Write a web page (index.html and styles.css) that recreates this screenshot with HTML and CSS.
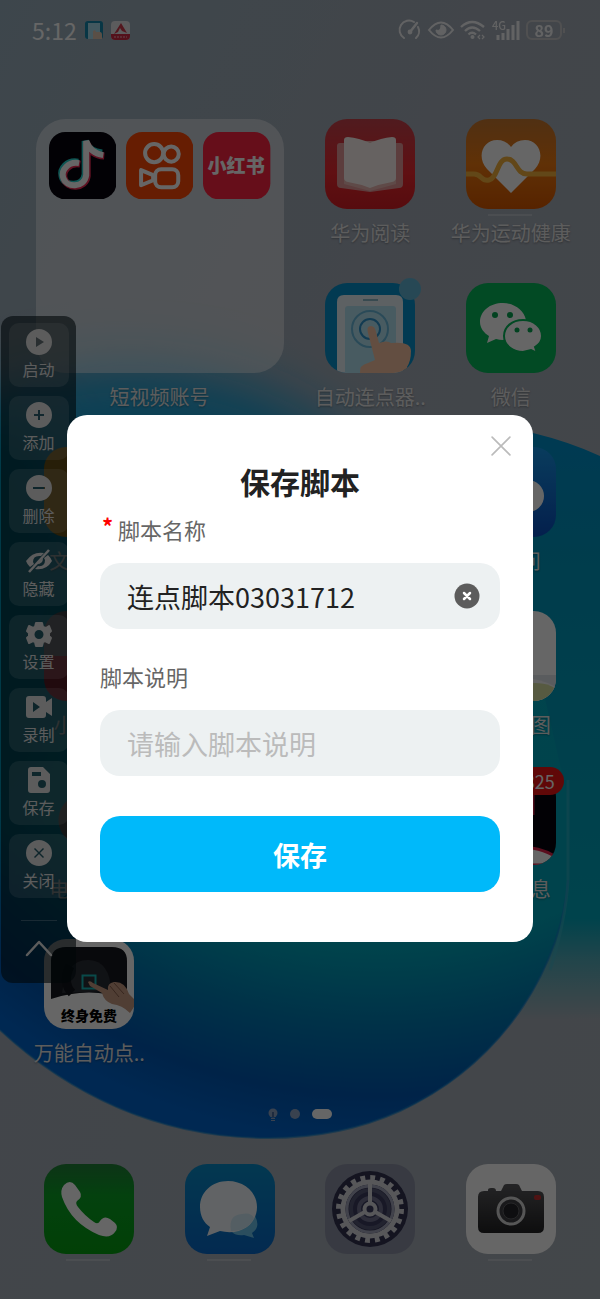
FILE: index.html
```html
<!DOCTYPE html>
<html lang="zh-CN">
<head>
    <meta charset="UTF-8">
    <meta name="viewport" content="width=device-width, initial-scale=1.0">
    <title>保存脚本</title>
    <link rel="stylesheet" href="styles.css">
</head>
<body>

<div class="phone">
    <svg class="wallpaper" viewBox="0 0 600 1299" preserveAspectRatio="none" aria-hidden="true">
        <defs>
            <linearGradient id="sky" x1="0" y1="0" x2="1" y2="1">
                <stop offset="0" stop-color="#9aafbd"/>
                <stop offset=".4" stop-color="#a5adb9"/>
                <stop offset="1" stop-color="#a9b1b8"/>
            </linearGradient>
            <radialGradient id="sphere" gradientUnits="userSpaceOnUse" cx="380" cy="500" r="640">
                <stop offset="0" stop-color="#00acc3"/>
                <stop offset=".7" stop-color="#00a8bd"/>
                <stop offset=".82" stop-color="#007cb4"/>
                <stop offset=".93" stop-color="#0058b4"/>
                <stop offset="1" stop-color="#0064cc"/>
            </radialGradient>
            <linearGradient id="back" x1="0" y1="0" x2="0" y2="1">
                <stop offset="0" stop-color="#0090d0"/>
                <stop offset=".25" stop-color="#0098bd"/>
                <stop offset=".83" stop-color="#00a8bd"/>
                <stop offset=".9" stop-color="#00a8bd" stop-opacity=".5"/>
                <stop offset="1" stop-color="#00a8bd" stop-opacity="0"/>
            </linearGradient>
            <filter id="soft" x="-50%" y="-50%" width="200%" height="200%"><feGaussianBlur stdDeviation="28"/></filter>
        </defs>
        <rect width="600" height="1299" fill="url(#sky)"/>
        <ellipse cx="130" cy="590" rx="290" ry="225" fill="#1fa0d4" filter="url(#soft)"/>
        <path d="M300 420Q450 410 533 433Q570 442 600 456V1020H300Z" fill="url(#back)"/>
        <path d="M0 700L100 500H500L568 800V880C562 960 510 1060 400 1111Q340 1138 268 1138C160 1138 70 1095 0 1030Z" fill="url(#sphere)"/>
        <path d="M568 880C562 960 510 1060 400 1111Q340 1138 268 1138C160 1138 70 1095 0 1030" fill="none" stroke="#1280cc" stroke-width="2" opacity=".6"/>
        <path d="M568 780V880Q566 920 550 970" fill="none" stroke="#40b4c8" stroke-width="3" opacity=".5"/>
        <ellipse cx="0" cy="620" rx="80" ry="210" fill="#008fae" filter="url(#soft)"/>
    </svg>

    <header class="status-bar">
        <span class="time">5:12</span>
        <svg width="18" height="18" viewBox="0 0 18 18" aria-hidden="true">
            <rect width="18" height="18" rx="3" fill="#1487ad"/>
            <path d="M3 2H15V18H3Z" fill="#a8dcee"/>
            <path d="M8 10L10 9L11 11H15Q17 11 17 14V18H8Z" fill="#e0c5ae"/>
        </svg>
        <svg width="19" height="19" viewBox="0 0 19 19" aria-hidden="true">
            <rect width="19" height="19" rx="4" fill="#e6e6e8"/>
            <path d="M0 13H19V15Q19 19 15 19H4Q0 19 0 15Z" fill="#d22b44"/>
            <path d="M10 2L16 12L11 10L9 7L7 11L3 13Z" fill="#cf3b4d"/>
            <path d="M3 16H16" stroke="#f5b8c0" stroke-dasharray="2 1"/>
        </svg>
        <div class="indicators">
            <svg width="23" height="20" viewBox="0 0 23 20" fill="none" stroke="currentColor" stroke-width="2" stroke-linecap="round" aria-hidden="true">
                <path d="M5 18A9 9 0 0 1 15 2M19 7A9 9 0 0 1 17 18"/>
                <path d="M11 12L18 3" stroke-width="2.4"/><circle cx="11" cy="12" r="1.4" fill="currentColor"/>
            </svg>
            <svg width="26" height="20" viewBox="0 0 26 20" fill="none" stroke="currentColor" stroke-width="2" aria-hidden="true">
                <path d="M1 10Q13-5 25 10Q13 25 1 10Z"/>
                <path d="M13 5A5 5 0 1 1 8 10Q13 12 13 5Z" fill="currentColor" stroke-width="1"/>
            </svg>
            <svg width="26" height="20" viewBox="0 0 26 20" fill="none" stroke="currentColor" stroke-width="2.3" aria-hidden="true">
                <path d="M1 7Q12-3 24 7M5 11Q12 4 20 11M8.500 14.500Q12 11 16 14.500"/>
                <circle cx="12.500" cy="17" r="2" fill="currentColor" stroke="none"/>
                <path d="M20 15L18 17L20 19M22 15L24 17L22 19" stroke-width="1.200"/>
            </svg>
            <svg width="28" height="20" viewBox="0 0 28 20" fill="none" stroke="currentColor" stroke-width="3" aria-hidden="true">
                <path d="M6 20V15M11 20V13M16 20V9M21 20V5M26 20V1"/>
                <text class="network" x="0" y="10">4G</text>
            </svg>
            <span class="battery">89</span>
        </div>
    </header>

    <main class="home">
        <section class="folder">
            <div class="folder-box">
                <svg viewBox="0 0 67 67" aria-hidden="true">
                    <rect width="67" height="67" rx="16" fill="#06030e"/>
                    <g fill="none" stroke-width="7">
                        <path d="M29 30C18 28 11 37 13 44C16 55 34 55 36 42V9Q40 20 53 21" stroke="#25d5d0"/>
                        <path d="M31 32C20 30 13 39 15 46C18 57 36 57 38 44V12Q42 23 55 24" stroke="#f02c56"/>
                        <path d="M30 31C19 29 12 38 14 45C17 56 35 56 37 43V9Q41 21 54 23" stroke="#fff" stroke-width="6"/>
                    </g>
                </svg>
                <svg viewBox="0 0 67 67" fill="none" stroke="#fff" stroke-width="4" aria-hidden="true">
                    <rect width="67" height="67" rx="16" fill="#ff4a06" stroke="none"/>
                    <circle cx="28" cy="21" r="9"/><circle cx="45" cy="22" r="7.500"/>
                    <rect x="29" y="37" width="23" height="18" rx="6"/>
                    <path d="M15 38V53L27 48V43Z" stroke-linejoin="round"/>
                </svg>
                <svg viewBox="0 0 67 67" aria-hidden="true">
                    <rect width="67" height="67" rx="16" fill="#ff2443"/>
                    <text class="red-book" x="33" y="41" text-anchor="middle">小红书</text>
                </svg>
            </div>
            <span class="label">短视频账号</span>
        </section>

        <a class="app" href="#">
            <span class="icon reader">
                <svg viewBox="0 0 90 90" aria-hidden="true">
                    <path d="M15 24H75Q78 24 78 27V65Q78 69 74 69L45 73L16 69Q12 69 12 65V27Q12 24 15 24Z" fill="#e79a9a"/>
                    <path d="M19 22H71V65L45 72L19 65Z" fill="#eeb9b4"/>
                    <path d="M23 18Q34 19 45 24Q56 19 67 18Q71 18 71 21V59Q71 62 67 63Q55 65 45 69Q35 65 23 63Q19 62 19 59V21Q19 18 23 18Z" fill="#fff6f2"/>
                </svg>
            </span>
            <span class="label">华为阅读</span>
        </a>
        <a class="app" href="#">
            <span class="icon health running">
                <svg viewBox="0 0 90 90" aria-hidden="true">
                    <path d="M45 74L21 50C10 38 17 21 31 21Q40 21 45 28Q50 21 59 21C73 21 80 38 69 50Z" fill="#fff"/>
                    <path d="M0 55H8C16 55 15 63 23 61C32 59 31 40 41 40C51 40 50 55 61 55H90" fill="none" stroke="#f5b13c" stroke-width="5"/>
                </svg>
            </span>
            <span class="label">华为运动健康</span>
        </a>
        <a class="app" href="#">
            <span class="icon clicker">
                <svg viewBox="0 0 90 90" aria-hidden="true">
                    <path d="M12 90V19Q12 12 19 12H71Q78 12 78 19V90Z" fill="#e9f2f8"/>
                    <path d="M20 90V26Q20 23 23 23H68Q71 23 71 26V90Z" fill="#b4e3f2"/>
                    <path d="M38 17H53" stroke="#8cb8c9" stroke-width="2"/>
                    <g fill="none" stroke="#69b9dc" stroke-width="2"><circle cx="45" cy="46" r="18"/><circle cx="45" cy="46" r="10" stroke="#2d93cc"/></g>
                    <path d="M43 50Q41 43 46 43Q50 43 51 49L54 60Q62 57 66 60Q86 58 86 68Q86 78 82 84V90H35Q34 82 43 80L50 77Z" fill="#f8c4a2"/>
                </svg>
                <i class="dot"></i>
            </span>
            <span class="label">自动连点器..</span>
        </a>
        <a class="app" href="#">
            <span class="icon wechat">
                <svg viewBox="0 0 90 90" aria-hidden="true">
                    <path d="M37 20C24 20 14 28 14 39C14 45 18 50 23 53L21 60L30 56Q37 58 44 56L60 37C58 27 48 20 37 20Z" fill="#fff"/>
                    <path d="M57 37C46 37 38 44 38 53C38 63 48 69 57 69L65 67L71 70L69 64C74 61 76 57 76 53C76 44 68 37 57 37Z" fill="#fff" stroke="#05b85a" stroke-width="2"/>
                    <g fill="#05a652"><circle cx="29" cy="32" r="3"/><circle cx="44" cy="32" r="3"/><circle cx="51" cy="47" r="2.500"/><circle cx="64" cy="47" r="2.500"/></g>
                </svg>
            </span>
            <span class="label">微信</span>
        </a>

        <a class="app first" href="#">
            <span class="icon files"></span>
            <span class="label">文件管理</span>
        </a>
        <a class="app last" href="#">
            <span class="icon chat">
                <svg viewBox="0 0 90 90" aria-hidden="true"><circle cx="62" cy="49" r="16" fill="#fff"/></svg>
            </span>
            <span class="label">问一问</span>
        </a>
        <a class="app first" href="#">
            <span class="icon note"></span>
            <span class="label">小红书..</span>
        </a>
        <a class="app last" href="#">
            <span class="icon map">
                <svg viewBox="0 0 90 90" aria-hidden="true">
                    <path d="M0 64H90V90H0Z" fill="#e2e5ea"/>
                    <path d="M30 70Q65 62 90 76V90H30Z" fill="#f8f8f8"/>
                    <path d="M40 78Q75 66 90 78V90H40Z" fill="#d9e2a4"/>
                </svg>
            </span>
            <span class="label">高德地图</span>
        </a>
        <a class="app first" href="#">
            <span class="icon video"></span>
            <span class="label">电视直播</span>
        </a>
        <a class="app last" href="#">
            <span class="icon news">
                <svg viewBox="0 0 90 90" aria-hidden="true">
                    <path d="M66 18V40" stroke="#c41e42" stroke-width="5"/>
                    <path d="M30 73Q70 68 90 82V90H30Z" fill="#fff" stroke="#e0224a" stroke-width="3"/>
                </svg>
                <b class="badge">825</b>
            </span>
            <span class="label">通知信息</span>
        </a>
        <a class="app first" href="#">
            <span class="icon universal">
                <svg viewBox="0 0 90 90" aria-hidden="true">
                    <path d="M7 60V22Q7 8 22 8H68Q83 8 83 22V60Q45 47 7 60Z" fill="#15171e"/>
                    <path d="M18 54Q22 20 45 21Q66 22 67 52" fill="#2a2d35"/>
                    <path d="M28 54Q18 44 26 27" fill="none" stroke="#111319" stroke-width="9"/>
                    <rect x="38.500" y="36.500" width="13" height="13" fill="none" stroke="#18b9b8" stroke-width="2"/>
                    <path d="M44 43Q46 41 49 44L64 51Q63 44 70 43Q81 42 85 55L90 60V68L86 74Q78 66 68 65Q60 62 58 54L46 47Z" fill="#c79b83"/>
                    <path d="M66 47L75 58M70 44L80 55" stroke="#8a604d" fill="none"/>
                    <text class="free" x="45" y="82" text-anchor="middle">终身免费</text>
                </svg>
            </span>
            <span class="label">万能自动点..</span>
        </a>
    </main>

    <div class="pager">
        <svg width="10" height="13" viewBox="0 0 10 13" aria-hidden="true">
            <circle cx="5" cy="5" r="4.500" fill="#8fa5c5"/><path d="M5 4V9" stroke="#345a92" stroke-width="1.500"/><path d="M3 10.500H7M3 12.500H7" stroke="#8fa5c5"/>
        </svg>
        <i></i>
        <i class="current"></i>
    </div>

    <nav class="dock">
        <a class="icon phone-call running" href="#" aria-label="电话">
            <svg viewBox="0 0 90 90" aria-hidden="true">
                <path d="M20 21Q26 15 31 21L36 28Q39 33 33 37Q31 39 34 43Q41 52 50 58Q54 61 56 57Q60 51 66 55L71 59Q75 63 71 68Q66 75 55 71Q27 59 18 33Q16 26 20 21Z" fill="#fff"/>
            </svg>
        </a>
        <a class="icon messages running" href="#" aria-label="信息">
            <svg viewBox="0 0 90 90" aria-hidden="true">
                <path d="M70 52Q76 63 67 69L69 74L59 71Q51 72 47 68Z" fill="#6cc2ea"/>
                <path d="M43 17C27 17 15 28 15 43C15 52 19 59 25 63L22 72L35 67C56 72 72 60 72 43C72 28 59 17 43 17Z" fill="#f2f8fc"/>
                <path d="M46 67Q43 51 57 50Q66 48 69 54Q63 67 46 67Z" fill="#d2ebf7"/>
            </svg>
        </a>
        <a class="icon settings" href="#" aria-label="设置">
            <svg viewBox="0 0 90 90" fill="none" aria-hidden="true">
                <circle cx="45" cy="45" r="38" fill="#323352"/>
                <circle cx="45" cy="45" r="31" stroke="#d9d9df" stroke-width="6" stroke-dasharray="4.820 4.918"/>
                <circle cx="45" cy="45" r="27" stroke="#d9d9df" stroke-width="5"/>
                <circle cx="45" cy="45" r="23" stroke="#a4a6bb" stroke-width="3"/>
                <circle cx="45" cy="45" r="19" fill="#3c3d60" stroke="#565777" stroke-width="4"/>
                <circle cx="45" cy="45" r="11" stroke="#71728f" stroke-width="4"/>
                <path d="M45 45V20M45 45L24 57M45 45L66 57" stroke="#d9d9df" stroke-width="4"/>
                <circle cx="45" cy="45" r="5.500" fill="#3c3d60" stroke="#d9d9df" stroke-width="4"/>
            </svg>
        </a>
        <a class="icon camera running" href="#" aria-label="相机">
            <svg viewBox="0 0 90 90" aria-hidden="true">
                <defs><linearGradient id="body" x1="0" y1="0" x2="0" y2="1"><stop offset="0" stop-color="#5b5b5e"/><stop offset="1" stop-color="#222224"/></linearGradient></defs>
                <path d="M22 27V26Q22 24 25 24H27Q30 24 30 27H35L38 21Q39 20 41 20H50Q52 20 53 21L56 27H72Q78 27 78 33V63Q78 69 72 69H18Q12 69 12 63V33Q12 27 18 27Z" fill="url(#body)"/>
                <circle cx="45" cy="47" r="13" fill="#404044" stroke="#d8d8d8" stroke-width="3"/>
                <circle cx="45" cy="47" r="8" fill="#242428" stroke="#606064" stroke-width="1"/>
                <rect x="68" y="31" width="7" height="5" rx="2" fill="#c53030"/>
            </svg>
        </a>
    </nav>

    <aside class="toolbar">
        <button type="button">
            <svg viewBox="0 0 28 28" aria-hidden="true"><path fill-rule="evenodd" d="M14 1A13 13 0 1 0 14 27A13 13 0 1 0 14 1ZM11 9L19 14L11 19Z"/></svg>
            启动
        </button>
        <button type="button">
            <svg viewBox="0 0 28 28" aria-hidden="true"><path fill-rule="evenodd" d="M14 1A13 13 0 1 0 14 27A13 13 0 1 0 14 1ZM13 9H15V13H19V15H15V19H13V15H9V13H13Z"/></svg>
            添加
        </button>
        <button type="button">
            <svg viewBox="0 0 28 28" aria-hidden="true"><path fill-rule="evenodd" d="M14 1A13 13 0 1 0 14 27A13 13 0 1 0 14 1ZM8 13H20V15H8Z"/></svg>
            删除
        </button>
        <button type="button">
            <svg viewBox="0 0 28 28" aria-hidden="true">
                <path d="M1 14Q8 4 19 6L16 9Q8 8 8 15L9 17L5 20Q2 17 1 14ZM23 8Q26 11 27 14Q21 24 10 22L13 19Q20 20 20 13L19 11Z"/>
                <path d="M18 11Q18 17 12 17Z"/><path d="M4 25L24 3" stroke="currentColor" stroke-width="2.500"/>
            </svg>
            隐藏
        </button>
        <button type="button">
            <svg viewBox="0 0 28 28" aria-hidden="true"><path fill-rule="evenodd" stroke="currentColor" stroke-width="2" stroke-linejoin="round" d="M11 3H17L18 7L21 8L24 6L26 11L24 13V16L26 18L24 23L20 21L18 22L17 26H11L10 22L8 21L4 23L2 18L4 16V13L2 11L4 6L8 8L10 7ZM14 9A5 5 0 1 0 14 20A5 5 0 1 0 14 9Z"/></svg>
            设置
        </button>
        <button type="button">
            <svg viewBox="0 0 28 28" aria-hidden="true"><path fill-rule="evenodd" d="M4 3H18Q21 3 21 6V9L27 5V23L21 19V22Q21 25 18 25H4Q1 25 1 22V6Q1 3 4 3ZM8 9V19L15 14Z"/></svg>
            录制
        </button>
        <button type="button">
            <svg viewBox="0 0 28 28" aria-hidden="true"><path fill-rule="evenodd" d="M6 1H18L25 8V24Q25 27 22 27H6Q3 27 3 24V4Q3 1 6 1ZM7 6V10H16V6ZM17 14A4 4 0 1 0 17 22A4 4 0 1 0 17 14Z"/></svg>
            保存
        </button>
        <button type="button">
            <svg viewBox="0 0 28 28" aria-hidden="true"><path fill-rule="evenodd" d="M14 1A13 13 0 1 0 14 27A13 13 0 1 0 14 1ZM10 9L14 13L18 9L19 10L15 14L19 18L18 19L14 15L10 19L9 18L13 14L9 10Z"/></svg>
            关闭
        </button>
        <hr>
        <button type="button" class="collapse" aria-label="收起">
            <svg viewBox="0 0 28 18" aria-hidden="true"><path d="M2 16L14 3L26 16" fill="none" stroke="currentColor" stroke-width="2.500" stroke-linecap="round" stroke-linejoin="round"/></svg>
        </button>
    </aside>

    <div class="overlay">
        <div class="dialog" role="dialog" aria-labelledby="dialog-title">
            <div class="dialog-top">
                <button type="button" class="close" aria-label="关闭">
                    <svg viewBox="0 0 18 18" aria-hidden="true"><path d="M1 1L17 17M17 1L1 17" fill="none" stroke="#bbb" stroke-width="1.500" stroke-linecap="round"/></svg>
                </button>
            </div>
            <h2 id="dialog-title">保存脚本</h2>
            <form>
                <label for="name"><span class="required">*</span>脚本名称</label>
                <div class="field">
                    <input type="text" id="name" value="连点脚本03031712">
                    <button type="button" class="clear" aria-label="清除">
                        <svg viewBox="0 0 26 26" aria-hidden="true"><circle cx="13" cy="13" r="12.500" fill="#5c5c5c"/><path d="M10 10L16 16M16 10L10 16" stroke="#fff" stroke-width="2.500" stroke-linecap="round"/></svg>
                    </button>
                </div>
                <label for="note" class="second">脚本说明</label>
                <div class="field">
                    <input type="text" id="note" placeholder="请输入脚本说明">
                </div>
                <button type="submit" class="save">保存</button>
            </form>
        </div>
    </div>
</div>

</body>
</html>
```
FILE: styles.css
```css
* {
    box-sizing: border-box;
}

body {
    margin: 0;
    font-family: "Noto Sans CJK SC", sans-serif;
    background: #42474b;
}

button, input {
    font-family: inherit;
    border: none;
    padding: 0;
    background: none;
}

svg {
    display: block;
}

a {
    color: inherit;
    text-decoration: none;
}

.phone {
    position: relative;
    min-height: 100vh;
    padding-bottom: 45px;
    color: #fff;
    overflow: hidden;
}

.wallpaper {
    position: absolute;
    inset: 0;
    width: 100%;
    height: 100%;
    z-index: -1;
}

/* Status bar */
.status-bar {
    display: flex;
    align-items: center;
    gap: 8px;
    height: 60px;
    padding: 0 38px 0 32px;
}

.time {
    font-size: 23px;
    line-height: 30px;
}

.indicators {
    display: flex;
    align-items: center;
    gap: 6px;
    margin-left: auto;
    opacity: 0.9;
}

.indicators svg {
    overflow: visible;
}

.network {
    font-size: 11px;
    font-weight: 500;
    fill: currentColor;
    stroke: none;
}

.battery {
    position: relative;
    width: 36px;
    border: 2px solid #ccc;
    border-radius: 6px;
    font-size: 16px;
    font-weight: 700;
    line-height: 16px;
    text-align: center;
}

.battery::after {
    content: "";
    position: absolute;
    top: 6px;
    right: -5px;
    width: 2px;
    height: 5px;
    background: #ccc;
}

/* Home screen */
.home {
    display: grid;
    grid-template-columns: repeat(4, 1fr);
    grid-auto-rows: 164px;
    padding: 59px 19px 0;
}

.app, .folder {
    display: flex;
    flex-direction: column;
    align-items: center;
    gap: 10px;
}

.folder {
    grid-column: span 2;
    grid-row: span 2;
}

.folder-box {
    display: grid;
    grid-template-columns: repeat(3, 1fr);
    gap: 10px;
    width: 248px;
    height: 254px;
    padding: 13px;
    border-radius: 30px;
    background: rgba(255, 255, 255, 0.45);
}

.first {
    grid-column: 1;
}

.last {
    grid-column: 4;
}

.label {
    color: #e8e8e8;
    font-size: 20px;
    line-height: 28px;
    white-space: nowrap;
    text-shadow: 0 1px 2px rgba(0, 0, 0, 0.3);
}

.icon {
    position: relative;
    width: 90px;
    height: 90px;
    border-radius: 22px;
}

.icon svg {
    width: 90px;
    height: 90px;
    border-radius: 22px;
}

.running::after {
    content: "";
    position: absolute;
    left: 22px;
    bottom: -7px;
    width: 44px;
    height: 2px;
    background: rgba(255, 255, 255, 0.25);
}

.reader { background: linear-gradient(#c8444d, #f02830 60%, #d81f25); }
.health { background: linear-gradient(#c87830, #f07a10 50%, #d85800); }
.clicker { background: #0792cc; }
.wechat { background: #05b85a; }
.files { background: #f5a614; }
.chat { background: linear-gradient(#1696e8, #0a4fc0); }
.note { background: linear-gradient(#8a7b80 50%, #d0293c 50%); }
.map { background: #fff; }
.video { background: radial-gradient(circle at 40px 45px, #877370 25px, transparent 26px); }
.news { background: #07040d; }
.universal { background: #fff; }
.phone-call { background: linear-gradient(#22823a, #0aa325 35%, #04a010); }
.messages { background: linear-gradient(#088cc8, #0868c8); }
.settings { background: #8d92a6; }
.camera { background: #fff; }

.red-book {
    font-size: 19px;
    font-weight: 900;
    fill: #fff;
}

.free {
    font-size: 14px;
    font-weight: 900;
    fill: #000;
}

.dot {
    position: absolute;
    top: -5px;
    right: -6px;
    width: 22px;
    height: 22px;
    border-radius: 50%;
    background: #63b5d5;
}

.badge {
    position: absolute;
    top: -8px;
    right: -8px;
    height: 28px;
    padding: 0 9px;
    border-radius: 14px;
    background: #f01414;
    font-size: 18px;
    font-weight: 400;
    line-height: 28px;
}

.pager {
    display: flex;
    justify-content: center;
    align-items: center;
    gap: 12px;
    height: 22px;
}

.pager i {
    width: 10px;
    height: 10px;
    border-radius: 5px;
    background: #8fa5c5;
}

.pager .current {
    width: 20px;
    background: #fff;
}

.dock {
    display: grid;
    grid-template-columns: repeat(4, 1fr);
    justify-items: center;
    padding: 39px 19px 0;
}

/* Floating toolbar of the clicker */
.toolbar {
    position: absolute;
    top: 316px;
    left: 1px;
    display: flex;
    flex-direction: column;
    align-items: center;
    gap: 9px;
    width: 75px;
    padding: 7px 7px 17px;
    border-radius: 12px;
    background: rgba(0, 15, 20, 0.6);
}

.toolbar button {
    display: flex;
    flex-direction: column;
    align-items: center;
    gap: 1px;
    width: 60px;
    height: 64px;
    padding-top: 5px;
    border-radius: 10px;
    background: rgba(255, 255, 255, 0.14);
    color: #e6e6e6;
    font-size: 16px;
    line-height: 24px;
}

.toolbar svg {
    width: 28px;
    height: 28px;
    fill: currentColor;
}

.toolbar hr {
    width: 36px;
    height: 1px;
    margin: 13px 0 0;
    border: none;
    background: rgba(255, 255, 255, 0.25);
}

.toolbar .collapse {
    justify-content: center;
    height: 36px;
    padding: 0;
    background: none;
}

.collapse svg {
    height: 18px;
}

/* Save dialog */
.overlay {
    position: absolute;
    inset: 0;
    display: flex;
    align-items: flex-start;
    padding: 415px 67px 0;
    background: rgba(0, 0, 0, 0.6);
}

.dialog {
    flex: 1;
    border-radius: 20px;
    background: #fff;
    color: #222;
}

.dialog-top {
    display: flex;
    justify-content: flex-end;
    padding: 16px 17px 0;
}

.close {
    display: flex;
    align-items: center;
    justify-content: center;
    width: 30px;
    height: 30px;
}

.close svg {
    width: 20px;
}

.dialog h2 {
    margin: 0;
    font-size: 30px;
    line-height: 40px;
    text-align: center;
}

form {
    padding: 12px 33px 50px;
}

form label {
    display: block;
    font-size: 22px;
    line-height: 32px;
    color: #666;
}

.second {
    margin-top: 31px;
}

.required {
    display: inline-block;
    width: 18px;
    padding-left: 2px;
    color: #f00;
    font-weight: 700;
    line-height: 24px;
    vertical-align: top;
}

.field {
    display: flex;
    align-items: center;
    height: 66px;
    margin-top: 18px;
    padding: 0 20px 0 27px;
    border-radius: 20px;
    background: #edf1f2;
}

.field input {
    flex: 1;
    min-width: 0;
    font-size: 27px;
    color: #222;
    outline: none;
}

.field input::placeholder {
    color: #bbb;
}

.clear svg {
    width: 26px;
    height: 26px;
}

.save {
    width: 100%;
    height: 76px;
    margin-top: 40px;
    border-radius: 20px;
    background: #00b9fa;
    color: #fff;
    font-size: 27px;
    font-weight: 700;
}
```
